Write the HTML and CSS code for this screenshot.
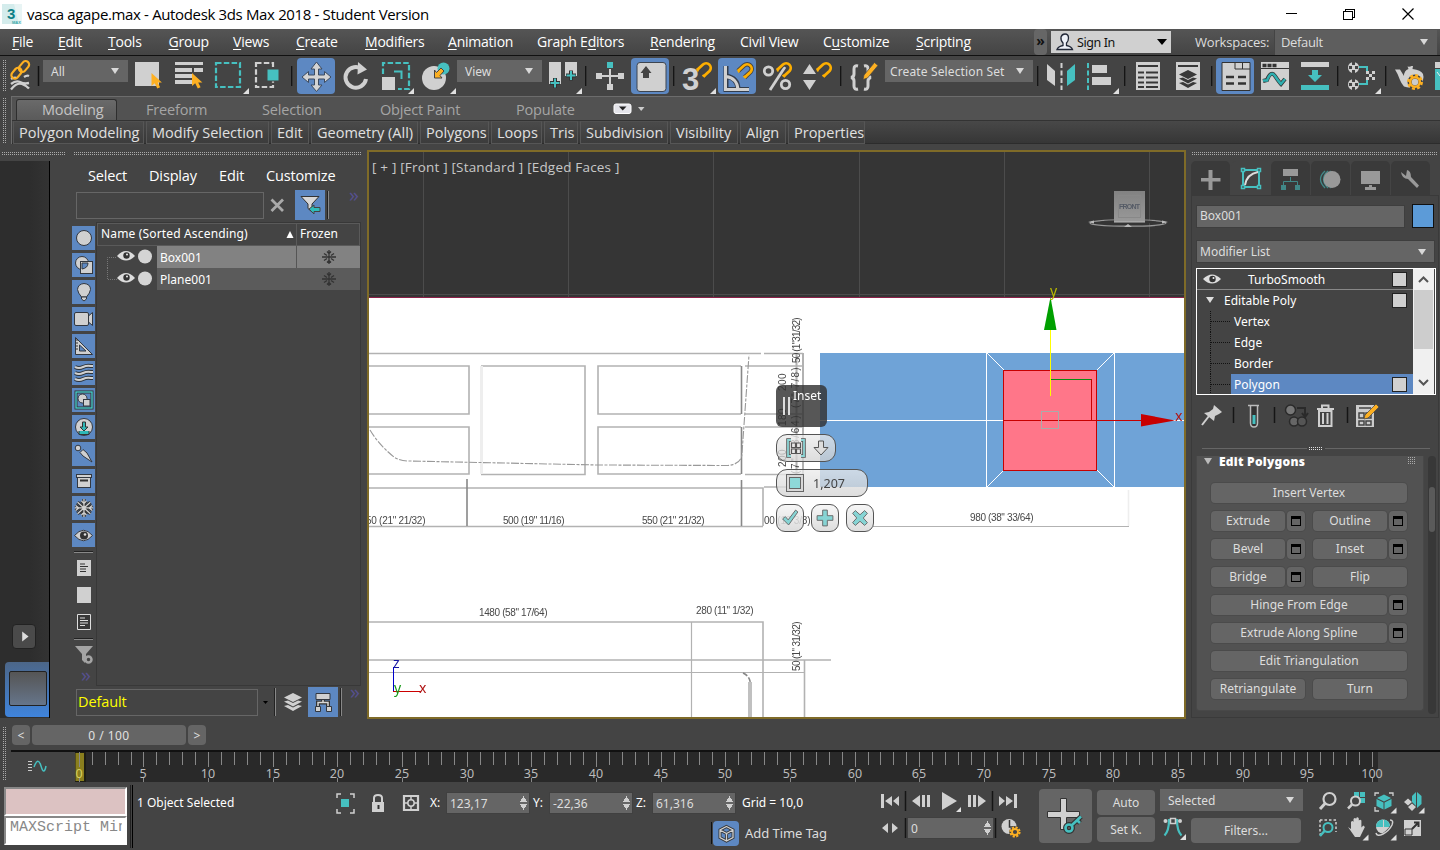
FILE: index.html
```html
<!DOCTYPE html>
<html lang="en">
<head>
<meta charset="utf-8">
<title>vasca agape.max - Autodesk 3ds Max 2018 - Student Version</title>
<link rel="stylesheet" href="styles.css">
</head>
<body>
<svg width="0" height="0" class="defs">
  <defs>
    <linearGradient id="cube" x1="0" y1="0" x2="0" y2="1"><stop offset="0" stop-color="#828282"/><stop offset="1" stop-color="#999"/></linearGradient>
    <path id="cursor" d="M0 0V13L3.2 10.2L5.8 15.6L8.6 14.2L6.2 9.4H10.4Z" fill="#fdb022"/>
    <g id="magnet" fill="none"><path d="M1 8L7 2.500A4.600 4.600 0 0 1 13.500 9L7.500 14.500" stroke="#444" stroke-width="4.500"/><path d="M1 8L7 2.500A4.600 4.600 0 0 1 13.500 9L7.500 14.500" stroke="#fdae00" stroke-width="2.800"/><path d="M2 9.500L1.200 6.500M9 15L6.500 13" stroke="#fdae00" stroke-width="2"/></g>
    <path id="corner" d="M6 0V6H0Z" fill="#e0e0e0"/>
    <g id="wave"><path d="M1 3Q5 5 9 3T17 2H19" fill="none" stroke="#2e3338" stroke-width="4"/><path d="M1 3Q5 5 9 3T17 2H19" fill="none" stroke="#d0d0d0" stroke-width="2"/></g>
    <g id="flake"><path d="M7 0V14M0 7H14M2 2.500L12 11.500M12 2.500L2 11.500M5 1.500L7 3.500L9 1.500M5 12.500L7 10.500L9 12.500M0.500 5L3 7L0.500 9M13.500 5L11 7L13.500 9" fill="none"/></g>
    <g id="frost"><path d="M7 0V14M0 7H14M5 1.500L7 3.500L9 1.500M5 12.500L7 10.500L9 12.500M2 3.500L5 5.500M2 10.500L5 8.500M12 3.500L9 5.500M12 10.500L9 8.500" fill="none"/></g>
    <g id="layers"><path d="M9 0L18 4.500L9 9L0 4.500Z"/><path d="M0 8.500L4 7.400L9 10L14 7.400L18 8.500L9 13.500Z"/><path d="M0 13L4 12L9 14.600L14 12L18 13L9 18Z"/></g>
  </defs>
</svg>

<header class="titlebar">
  <svg class="applogo" width="20" height="20" viewBox="0 0 20 20"><rect width="20" height="20" fill="#d4ecec"/><path d="M12 0H20V20H17Z" fill="#e8f4f4"/><text x="5" y="15" class="logo3">3</text><text x="10" y="20" class="logom">MAX</text></svg>
  <span class="apptitle">vasca agape.max - Autodesk 3ds Max 2018 - Student Version</span>
  <svg class="winbtns" width="160" height="28" viewBox="1280 0 160 28"><path d="M1285.500 13.500H1297M1343.500 11.500H1352.500V19.500H1343.500ZM1345.500 11V9.500H1354.500V17.500H1353" fill="none" stroke="#000" shape-rendering="crispEdges"/><path d="M1402.500 8.500L1413.500 19.500M1413.500 8.500L1402.500 19.500" stroke="#000" stroke-width="1.2"/></svg>
</header>

<nav class="menubar">
  <div class="menus">
    <span><u>F</u>ile</span><span><u>E</u>dit</span><span><u>T</u>ools</span><span><u>G</u>roup</span><span><u>V</u>iews</span><span><u>C</u>reate</span><span><u>M</u>odifiers</span><span><u>A</u>nimation</span><span>Graph E<u>d</u>itors</span><span><u>R</u>endering</span><span>Civil View</span><span>C<u>u</u>stomize</span><span><u>S</u>cripting</span>
  </div>
  <span class="more">»</span>
  <div class="signin"><svg width="18" height="18" viewBox="0 0 18 18"><path d="M1 16.500Q2 13.500 7 12.500L7 10Q4.500 7.500 5 4Q6 1 9 1Q12.500 1 12.500 5Q12.500 8 10.500 10V12.500Q15.500 13.500 16.500 16.500Z" fill="#eef1f8" stroke="#222838" stroke-width="1.300"/></svg><span>Sign In</span><i class="tri dark"></i></div>
  <span class="wslabel">Workspaces:</span>
  <div class="wsselect"><span>Default</span><i class="tri"></i></div>
</nav>

<div class="toolbar">
  <i class="vgrip"></i>
  <svg width="37" height="40" viewBox="6 56 37 40"><path d="M11 79Q14 77 17 78M24 77Q27 75 29 76M11 84Q16 80 20 82T29 83M11 89.500Q17 82 22 84T29 88.500" fill="none" stroke="#d0d0d0" stroke-width="2.300"/><g fill="none" stroke="#fdb022" stroke-width="2.200"><rect x="10.500" y="69.700" width="12" height="7" rx="3.500" transform="rotate(-50 16.500 73.200)"/><rect x="18" y="63" width="12" height="7" rx="3.500" transform="rotate(-50 24 66.500)"/></g><path d="M38.500 66V86" stroke="#111" stroke-width="1.500"/></svg>
  <div class="drop w85"><span>All</span><i class="tri"></i></div>
  <svg width="41" height="40" viewBox="128 56 41 40"><path d="M135 62H159V86H135Z" fill="#d0d0d0"/><use href="#cursor" x="151.500" y="73"/></svg>
  <svg width="40" height="40" viewBox="169 56 40 40"><path d="M175 62h28v3h-28zM175 68h17v4h-17zM194 68h9v4h-9zM175 74h17v4h-17zM175 80h17v4h-17z" fill="#d0d0d0"/><use href="#cursor" x="192" y="73"/></svg>
  <svg width="40" height="40" viewBox="209 56 40 40"><path d="M216 63H240V87H216Z" fill="none" stroke="#46c0c0" stroke-width="2.200" stroke-dasharray="5.500 2.300"/><use href="#corner" x="243" y="88"/></svg>
  <svg width="42" height="40" viewBox="249 56 42 40"><path d="M256 63H273V87H256Z" fill="none" stroke="#d0d0d0" stroke-width="2.200" stroke-dasharray="5.500 2.300"/><path d="M267 69h12v12h-12z" fill="#46c0c0" stroke="#444"/></svg>
  <i class="tsep"></i>
  <svg class="on first" width="38" height="36" viewBox="297 58 38 36"><path d="M316.500 62L322 69H318.500V75H324.500V71.500L331 77L324.500 82.500V79H318.500V85H322L316.500 91.500L311 85H314.500V79H308.500V82.500L302 77L308.500 71.500V75H314.500V69H311Z" fill="#d4d4d4" stroke="#3d4b60"/></svg>
  <svg width="42" height="40" viewBox="335 56 42 40"><path d="M362.500 69.500A10.300 10.300 0 1 0 366 79" fill="none" stroke="#d0d0d0" stroke-width="4"/><path d="M358 62L367 69.500L357.500 74.500Z" fill="#d0d0d0"/></svg>
  <svg width="40" height="40" viewBox="377 56 40 40"><path d="M383 74V63H409V89H398" fill="none" stroke="#46c0c0" stroke-width="2.200" stroke-dasharray="5.500 2.300"/><path d="M394 71.500H401.500V79" fill="none" stroke="#46c0c0" stroke-width="2"/><path d="M382 77h13v13h-13z" fill="#d0d0d0"/><use href="#corner" x="408" y="88"/></svg>
  <svg width="40" height="40" viewBox="417 56 40 40"><circle cx="434" cy="78" r="12" fill="#d0d0d0"/><circle cx="443.500" cy="68.500" r="6" fill="#46c0c0"/><path d="M444 71L441 68L436.500 72.500L434.500 70V78H442L440 75.500Z" fill="#fdb022" stroke="#444"/><use href="#corner" x="450" y="88"/></svg>
  <div class="drop w85"><span>View</span><i class="tri"></i></div>
  <svg width="43" height="40" viewBox="542 56 43 40"><path d="M549 62h12v22h-12zM565 62h12v14h-12z" fill="#d0d0d0"/><path d="M555 78v10M550 83h10M571 70.500v10M566 75.500h10" stroke="#333" stroke-width="4"/><path d="M555 78.500v9M550.500 83h9M571 71v9M566.500 75.500h9" stroke="#46c0c0" stroke-width="2"/><use href="#corner" x="576" y="88"/></svg>
  <i class="tsep"></i>
  <svg width="44" height="40" viewBox="587 56 44 40"><path d="M607 62h6v6h-6z" fill="#46c0c0"/><path d="M596 73h6v6h-6zM618 73h6v6h-6zM607 84h6v6h-6zM609 69h2v15h-2zM602 75h16v2h-16z" fill="#d0d0d0"/></svg>
  <svg class="on" width="38" height="36" viewBox="631 58 38 36"><rect x="637" y="62.500" width="29" height="29" rx="3" fill="#d0d0d0" stroke="#3d4550"/><path d="M646 66L651.500 73H649V78H643V73H640.500Z" fill="#444"/></svg>
  <svg width="4" height="40" viewBox="669 56 4 40"></svg>
  <i class="tsep"></i>
  <svg width="43" height="40" viewBox="675 56 43 40"><text x="682" y="89.500" class="t3">3</text><use href="#magnet" x="696" y="62"/><use href="#corner" x="710" y="88"/></svg>
  <svg class="on" width="38" height="36" viewBox="718 58 38 36"><path d="M726 66V89.500H749M726 76Q738 78 738 89.500" fill="none" stroke="#333d4c" stroke-width="5"/><path d="M725.500 66V89.500H749M726 76.500Q737 78 738 89.500" fill="none" stroke="#d0d0d0" stroke-width="3"/><use href="#magnet" x="737" y="63"/></svg>
  <svg width="41" height="40" viewBox="756 56 41 40"><g fill="none" stroke="#d0d0d0" stroke-width="2.800"><circle cx="768.500" cy="71" r="4.200"/><circle cx="785.500" cy="84.500" r="4.200"/><path d="M785 67L770 90"/></g><use href="#magnet" x="776" y="62"/></svg>
  <svg width="43" height="40" viewBox="797 56 43 40"><path d="M809.500 64L816 74H803ZM803 80H816L809.500 90Z" fill="#d0d0d0"/><use href="#magnet" x="816" y="62"/></svg>
  <i class="tsep"></i>
  <svg width="43" height="40" viewBox="842 56 43 40"><path d="M858 66Q854 65 854 69V74Q854 77 851 77.500Q854 78 854 81V86Q854 90 858 89M864 66Q868 65 868 69V74Q868 77 871 77.500Q868 78 868 81V86Q868 90 864 89" fill="none" stroke="#d0d0d0" stroke-width="3"/><path d="M864 75L874.500 62.500L878 65.500L867.500 78L863 79.500Z" fill="#fdb022" stroke="#444" stroke-width=".7"/></svg>
  <div class="drop w148"><span>Create Selection Set</span><i class="tri"></i></div>
  <svg width="4" height="40" viewBox="1033 56 4 40"></svg>
  <i class="tsep"></i>
  <svg width="41" height="40" viewBox="1039 56 41 40"><path d="M1047 64L1055 71V86L1047 80Z" fill="#d0d0d0"/><path d="M1075 64L1067 71V86L1075 80Z" fill="#46c0c0"/><path d="M1061.500 63V90" stroke="#d0d0d0" stroke-width="2" stroke-dasharray="5 2.500"/></svg>
  <svg width="44" height="40" viewBox="1080 56 44 40"><path d="M1088 63V90" stroke="#46c0c0" stroke-width="2" stroke-dasharray="5 2.500"/><path d="M1092 65h15v8h-15zM1092 77h19v8h-19z" fill="#d0d0d0"/><use href="#corner" x="1113" y="88"/></svg>
  <i class="tsep"></i>
  <svg width="42" height="40" viewBox="1126 56 42 40"><path d="M1136 62h24v28h-24z" fill="#d0d0d0"/><path d="M1138 66h20M1138 72.500h6M1146 72.500h12M1138 77.500h6M1146 77.500h12M1138 82.500h6M1146 82.500h12M1138 87h6M1146 87h12" stroke="#383838" stroke-width="2"/></svg>
  <svg width="43" height="40" viewBox="1168 56 43 40"><path d="M1176 62h24v28h-24z" fill="#d0d0d0"/><path d="M1178 66h20" stroke="#383838" stroke-width="2"/><use href="#layers" x="1179" y="70" fill="#383838"/></svg>
  <i class="tsep"></i>
  <svg width="3" height="40" viewBox="1213 56 3 40"></svg>
  <svg class="on" width="38" height="36" viewBox="1216 58 38 36"><path d="M1222 62.500H1250V90.500H1222Z" fill="#d0d0d0" stroke="#333"/><path d="M1235 62.500V69H1250M1242.500 62.500V69" fill="none" stroke="#333"/><path d="M1226 77h8M1238 77h8M1226 83.500h8M1238 83.500h8" stroke="#333" stroke-width="2.500"/></svg>
  <svg width="40" height="40" viewBox="1254 56 40 40"><path d="M1261 62h28v28h-28z" fill="#d0d0d0"/><path d="M1261 68.500h28" stroke="#333"/><path d="M1262.500 65.500h14" stroke="#333" stroke-width="3.500" stroke-dasharray="4 1"/><path d="M1263 81L1267 80Q1271 70 1275 76T1281 84L1285 79" fill="none" stroke="#333" stroke-width="4"/><path d="M1263 80.500H1267Q1271 70 1275 76T1281 84L1285 79" fill="none" stroke="#2fafb0" stroke-width="2.500"/></svg>
  <svg width="43" height="40" viewBox="1294 56 43 40"><path d="M1301 62h28v5h-28z" fill="#d0d0d0"/><path d="M1301 85h28v5h-28zM1312 70h6v5h4L1315 82L1308 75h4z" fill="#46c0c0"/></svg>
  <i class="tsep"></i>
  <svg width="46" height="40" viewBox="1339 56 46 40"><path d="M1359 67H1367V72M1359 84H1367V79" fill="none" stroke="#46c0c0" stroke-width="2"/><circle cx="1353.500" cy="67.500" r="5.500" fill="#d0d0d0"/><circle cx="1353.500" cy="84.500" r="5.500" fill="#d0d0d0"/><path d="M1352 62h3v3h-3zM1349 66h3v3h-3zM1355 66h3v3h-3zM1352 70h3v3h-3zM1352 79h3v3h-3zM1349 83h3v3h-3zM1355 83h3v3h-3zM1352 87h3v3h-3z" fill="#444"/><path d="M1366 71h3v3h-3zM1372 71h3v3h-3zM1369 74h3v3h-3zM1366 77h3v3h-3zM1372 77h3v3h-3z" fill="#d0d0d0"/><use href="#corner" x="1375" y="88"/></svg>
  <i class="tsep"></i>
  <svg width="54" height="40" viewBox="1387 56 54 40"><path d="M1395 69.500H1400L1404 76Q1404 70.500 1408.500 69L1407.500 66.500Q1410 67 1411.500 66L1413 66L1412.500 69Q1421 70 1423 74Q1425 80 1419 86Q1410 89 1404 86.500Q1401 83 1400 80Q1398 74 1395 69.500Z" fill="#d0d0d0"/><circle cx="1415" cy="82" r="7.500" fill="#444"/><circle cx="1415" cy="82" r="6.700" fill="none" stroke="#fdb022" stroke-width="2.500" stroke-dasharray="3 2.260"/><circle cx="1415" cy="82" r="4.800" fill="none" stroke="#fdb022" stroke-width="2.600"/><circle cx="1415" cy="82" r="3.200" fill="#ccc"/><path d="M1435 62h6v6h-6z" fill="#d0d0d0"/><path d="M1435 69h6v21h-6z" fill="#46c0c0"/><path d="M1437 72L1440 76" stroke="#eee"/></svg>
</div>

<div class="ribbon">
  <i class="vgrip tall"></i>
  <div class="ribbody">
    <div class="tabs"><span class="tab active">Modeling</span><span>Freeform</span><span>Selection</span><span>Object Paint</span><span>Populate</span>
      <svg width="40" height="14" viewBox="612 102 40 14"><rect x="614" y="104" width="17" height="9.500" rx="2" fill="#e4e4ea" stroke="#fff"/><path d="M619 106.500H626.500L622.700 110.500Z" fill="#222"/><path d="M638 107H644.500L641.200 111Z" fill="#ccc"/></svg></div>
    <div class="panels"><span>Polygon Modeling</span><span>Modify Selection</span><span>Edit</span><span>Geometry (All)</span><span>Polygons</span><span>Loops</span><span>Tris</span><span>Subdivision</span><span>Visibility</span><span>Align</span><span>Properties</span></div>
  </div>
</div>

<main class="work">
  <aside class="vptabs">
    <i class="hgrip"></i>
    <div class="strip"><svg class="expand" width="24" height="25" viewBox="0 0 24 25"><path d="M10 7L17 12.500L10 18Z" fill="#ddd"/></svg><div class="layout"><i></i></div></div>
  </aside>

  <section class="explorer">
    <i class="hgrip"></i>
    <div class="exmenu"><span>Select</span><span>Display</span><span>Edit</span><span>Customize</span></div>
    <div class="exsearch"><div class="field"></div>
      <svg width="31" height="30" viewBox="264 190 31 30"><path d="M271.500 199.500L283 211M283 199.500L271.500 211" stroke="#aaa" stroke-width="2.800"/></svg>
      <svg class="sq" width="30" height="30" viewBox="295 190 30 30"><path d="M301 196.500H319L312 204V212L308 208.500V204Z" fill="#d8d8d8" stroke="#333"/><path d="M309 209L314 205V207.500H320V211.500H314V214Z" fill="#2ebcb9" stroke="#444"/></svg>
      <i class="exsep"></i><span class="chev">»</span></div>
    <div class="exbody">
      <div class="filters">
        <svg class="sq" viewBox="0 0 23 24"><circle cx="12" cy="12" r="7.500" class="o"/></svg>
        <svg class="sq" viewBox="0 0 23 24"><circle cx="10" cy="10" r="6.500" class="o"/><rect x="8.500" y="8.500" width="12" height="12" class="o"/><path d="M10 10h6M10 10v6Q16 15 16 10" class="b"/></svg>
        <svg class="sq" viewBox="0 0 23 24"><path d="M12 3.500Q18.500 4 18.500 9.500Q18 13 14.500 17H9.500Q6 13 5.500 9.500Q6 4 12 3.500Z" class="o"/><path d="M9.500 17H14.500V19L12 21L9.500 19Z" class="o"/></svg>
        <svg class="sq" viewBox="0 0 23 24"><path d="M16.500 9L20.500 5.500V18.500L16.500 15Z" class="o"/><rect x="2.500" y="5.500" width="14" height="13" rx="1.500" class="o"/></svg>
        <svg class="sq" viewBox="0 0 23 24"><path d="M3.500 3.500V20.500H20.500Z" class="o"/><path d="M7.500 11V17H14Z" class="b"/><path d="M4 6h2M4 9h2M4 12h2M4 15h2" stroke="#333"/></svg>
        <svg class="sq" viewBox="0 0 23 24"><use href="#wave" x="2" y="3"/><use href="#wave" x="2" y="9"/><use href="#wave" x="2" y="15"/></svg>
        <svg class="sq" viewBox="0 0 23 24"><rect x="4" y="4" width="16" height="16" fill="#5c87c0" stroke="#333" stroke-width="3"/><rect x="4" y="4" width="16" height="16" fill="none" stroke="#46d0d0" stroke-width="1.300"/><circle cx="10.500" cy="10.500" r="4.500" class="o"/><rect x="11.500" y="11.500" width="6.500" height="6.500" class="o"/></svg>
        <svg class="sq" viewBox="0 0 23 24"><circle cx="12" cy="12" r="8.500" class="o"/><path d="M10.500 7h3v5h2.500L12 16L8 12h2.500zM7 16v3.500h10V16" fill="#2eb8b8" stroke="#333"/></svg>
        <svg class="sq" viewBox="0 0 23 24"><circle cx="6" cy="6" r="2.800" class="o"/><path d="M8 10.500L11 7.500L15 11L20 20L11 14Z" class="o"/></svg>
        <svg class="sq" viewBox="0 0 23 24"><rect x="5.500" y="8" width="13" height="10.500" class="o"/><rect x="4.500" y="5.500" width="15" height="3" class="o"/><path d="M8 11.500h8" stroke="#333" stroke-width="2"/></svg>
        <svg class="sq" viewBox="0 0 23 24"><g transform="translate(3 3) scale(1.280)"><use href="#flake" stroke="#333" stroke-width="2.600"/><use href="#flake" stroke="#d0d0d0"/></g></svg>
        <svg class="sq" viewBox="0 0 23 24"><path d="M2.500 12.500Q11.500 2 20.500 12.500Q11.500 23 2.500 12.500Z" class="o"/><circle cx="12" cy="12.500" r="4" fill="#333"/><circle cx="13" cy="11.500" r="1.300" fill="#ddd"/></svg>
        <hr>
        <svg viewBox="0 0 23 24"><path d="M5 4h14v16H5z" fill="#d0d0d0"/><path d="M8 8h5M8 10.500h8M8 13h6M8 15.500h6" stroke="#333"/></svg>
        <svg viewBox="0 0 23 24"><path d="M5 4h14v16H5z" fill="#d0d0d0"/></svg>
        <svg viewBox="0 0 23 24"><path d="M5.500 4.500h13v15h-13z" fill="#383838" stroke="#ddd"/><path d="M8 8h5M8 10.500h8M8 13h8M8 15.500h5" stroke="#ddd"/></svg>
        <hr>
        <svg viewBox="0 0 23 24"><path d="M3 3H21L14 11V14L13 20L10 17V11Z" fill="#a4a4a4"/><circle cx="16.500" cy="16.500" r="3" fill="#444" stroke="#a4a4a4" stroke-width="2.500"/></svg>
        <span class="chev">»</span>
      </div>
      <div class="tree">
        <div class="thead"><span>Name (Sorted Ascending)</span><svg width="8" height="8" viewBox="0 0 8 8"><path d="M4 0L7.500 7H.5Z" fill="#fff"/></svg><span class="fz">Frozen</span></div>
        <div class="trow sel"><svg width="59" height="22" viewBox="98 246 59 22"><path d="M107.500 268V257.500H117" fill="none" stroke="#777" stroke-dasharray="1 1"/><path d="M117 256Q126 246 135 256Q126 265 117 256Z" fill="#ddd"/><circle cx="126.500" cy="255.500" r="3.200" fill="#333"/><circle cx="127" cy="254.500" r="1" fill="#eee"/><circle cx="145" cy="256.500" r="7" fill="#d4d4d4"/></svg><span class="nm">Box001</span><span class="fr"><svg width="16" height="16" viewBox="-1 -1 16 16"><use href="#frost" stroke="#333" stroke-width="1.300"/></svg></span></div>
        <div class="trow"><svg width="59" height="22" viewBox="98 246 59 22"><path d="M107.500 246V257.500H117" fill="none" stroke="#777" stroke-dasharray="1 1"/><path d="M117 256Q126 246 135 256Q126 265 117 256Z" fill="#ddd"/><circle cx="126.500" cy="255.500" r="3.200" fill="#333"/><circle cx="127" cy="254.500" r="1" fill="#eee"/><circle cx="145" cy="256.500" r="7" fill="#d4d4d4"/></svg><span class="nm">Plane001</span><span class="fr"><svg width="16" height="16" viewBox="-1 -1 16 16"><use href="#frost" stroke="#333" stroke-width="1.300"/></svg></span></div>
      </div>
    </div>
    <div class="exfoot"><div class="field">Default</div>
      <svg width="50" height="30" viewBox="258 687 50 30"><path d="M263 701H268L265.500 704Z" fill="#000"/><path d="M275.500 688V716" stroke="#888"/><path d="M274.500 688V716" stroke="#222"/><use href="#layers" x="284" y="693" fill="#d0d0d0"/></svg>
      <svg class="sq" width="30" height="30" viewBox="308 687 30 30"><path d="M323 699v3M318 707v-4.500h10V707" fill="none" stroke="#333" stroke-width="4"/><path d="M323 699v3.500M318 707v-4.500h10V707" fill="none" stroke="#d8d8d8" stroke-width="1.500"/><path d="M316 693.500h14v6h-14zM315.500 706.500h5v5h-5zM326.500 706.500h5v5h-5z" class="o"/></svg>
      <i class="exsep"></i><span class="chev">»</span></div>
  </section>

  <section class="viewport">
    <svg class="scene" width="815" height="565" viewBox="369 152 815 565">
      <rect x="369" y="152" width="815" height="146" fill="#353535"/>
      <path d="M423.500 152V297M568.500 152V297M713.500 152V297M859.500 152V297M1004.500 152V297M1149.500 152V297M369 294.500H1184" stroke="#4c4c4c"/>
      <path d="M369 297.500H1184" stroke="#8c2048"/>
      <rect x="369" y="298" width="815" height="419" fill="#fff"/>
      <g class="plan" fill="none" stroke="#b2b2b2" stroke-width="1.600">
        <path d="M369 353.500H761M764 353.500H803M369 488H763V526M369 526.500H763M764 487H803"/>
        <path d="M369 366H469V414H369M369 427H469V474H369M481 366H585V474.500H481M741 366H598V414H741M741 427H598V474H741M745 366H803M745 414H803M745 427H803M745 474.500H803"/>
        <path d="M481.500 366V474" stroke="#eee" stroke-width="3"/>
        <path d="M467 479V526M741.500 480V526M741.500 366V414M741.500 427V474" stroke="#888"/>
        <path d="M803 353V488M796.500 353V474" stroke-width="2"/>
        <path d="M369 622H763V717M369 660H831M804.500 660V717"/>
        <path d="M369 672.500H804M691.500 622V717M873 526.500H1129" stroke-width="1.200"/>
        <path d="M1128.500 490V526" stroke="#eee"/>
        <path d="M750 682V717" stroke-width="4" stroke="#c0c0c0"/>
        <path d="M743 673Q750 676 750.500 684" stroke="#888" stroke-dasharray="5 2"/>
        <path d="M370 430Q379 445 394 457Q400 461 408 461L598 465L728 465.500Q742 464 742 453L749 355" stroke="#999" stroke-width="1.100" stroke-dasharray="8 1.500 3 1.500"/>
      </g>
      <g class="dims">
        <text x="366" y="524" textLength="59">50 (21" 21/32)</text>
        <text x="503" y="524" textLength="61">500 (19" 11/16)</text>
        <text x="642" y="524" textLength="62">550 (21" 21/32)</text>
        <text x="764" y="524" textLength="46">00 (13 3/8)</text>
        <text x="479" y="615.500" textLength="68">1480 (58" 17/64)</text>
        <text x="696" y="613.500" textLength="57">280 (11" 1/32)</text>
        <text x="970" y="521" textLength="63">980 (38" 33/64)</text>
        <text transform="translate(800 363) rotate(-90)" textLength="45">50 (1"31/32)</text>
        <text transform="translate(799 408) rotate(-90)" textLength="40">(7" 7/8)</text>
        <text transform="translate(799 474) rotate(-90)" textLength="58">(7" 33/64)</text>
        <text transform="translate(786 391) rotate(-90)" textLength="17">200</text>
        <text transform="translate(786 426) rotate(-90)" textLength="17">180</text>
        <text transform="translate(786 467) rotate(-90)" textLength="17">200</text>
        <text transform="translate(800 671) rotate(-90)" textLength="49">50 (1" 31/32)</text>
      </g>
      <g shape-rendering="crispEdges">
        <rect x="820" y="353" width="364" height="134" fill="#6fa3d7"/>
        <path d="M986.500 353V487M1114.500 353V487M820 420.500H1184" stroke="#fff"/>
        <path d="M987 353L1004 370M1114 353L1097 370M987 487L1004 470M1114 487L1097 470" stroke="#fff"/>
        <rect x="1003.500" y="370.500" width="93" height="100" fill="#ff7689" stroke="#c80000"/>
        <path d="M1051 379.500H1091" stroke="#0a8c10"/>
        <path d="M1091.500 379V420M1003 420.500H1142" stroke="#c80000"/>
        <path d="M1050.500 330V396" stroke="#ff0"/>
        <rect x="1041.500" y="411.500" width="17" height="17" fill="none" stroke="#aaa"/>
      </g>
      <path d="M1050.500 297L1056.500 330H1044Z" fill="#00a000"/><path d="M1175 420.500L1141 414V426.500Z" fill="#c80000"/>
      <text x="1050" y="296" class="ax" fill="#b9b900">y</text><text x="1175" y="421" class="ax" fill="#b01515">x</text>
      <path d="M393.500 667V691.500" stroke="#00c"/><path d="M393 691.500H421" stroke="#c00"/>
      <text x="393" y="668" class="ax" fill="#1515a0">z</text><text x="394" y="693" class="ax" fill="#1a9a1a">y</text><text x="419" y="693" class="ax" fill="#b01515">x</text>
      <ellipse cx="1128" cy="223" rx="38" ry="3.200" fill="none" stroke="#999" stroke-width="1.200"/>
      <ellipse cx="1128" cy="222" rx="28" ry="2" fill="#353535"/>
      <rect x="1114" y="191" width="31" height="31" fill="url(#cube)"/><path d="M1114 222H1145" stroke="#bbb"/><rect x="1118.500" y="195.500" width="22" height="22" fill="none" stroke="#888"/><text x="1119" y="209" class="cube" textLength="21">FRONT</text>
      <path d="M1088 222l6-1.500v3zM1168 222l-6-1.500v3zM1124 227l4-3l4 3z" fill="#bbb"/>
    </svg>
    <div class="vplabel">[ + ] [Front ] [Standard ] [Edged Faces ]</div>
    <div class="caddy">
      <div class="cadtitle"><i></i><span>Inset</span></div>
      <div class="pill p1"><svg width="24" height="20" viewBox="0 0 24 20"><path d="M7 2H4V18H7M17 2H20V18H17" fill="none" stroke="#555" stroke-width="3.500"/><path d="M7 2H4V18H7M17 2H20V18H17" fill="none" stroke="#8ed6d6" stroke-width="1.800"/><path d="M7.500 5h4v4.500h-4zM12.500 5h4v4.500h-4zM7.500 11h4v4.500h-4zM12.500 11h4v4.500h-4z" fill="#e8e8e8" stroke="#555" stroke-width="1.200"/></svg><svg width="16" height="20" viewBox="0 0 16 20"><path d="M5.500 3h5v6.500H15L8 17L1 9.500H5.500Z" fill="#ddd" stroke="#555"/></svg></div>
      <div class="pill p2"><svg width="18" height="18" viewBox="0 0 18 18"><rect x=".5" y=".5" width="17" height="17" fill="#d8d8d8" stroke="#666"/><rect x="3.500" y="3.500" width="11" height="11" fill="#8ed8d8" stroke="#666"/></svg><span>1,207</span></div>
      <div class="cadbtns">
        <svg width="28" height="28" viewBox="0 0 28 28"><path d="M6 15L9 12.500L12 16L20 5.500L22.500 7.500L12.500 21.500Z" class="cg"/></svg>
        <svg width="28" height="28" viewBox="0 0 28 28"><path d="M11.500 5.500h5v6h6v5h-6v6h-5v-6h-6v-5h6z" class="cg"/></svg>
        <svg width="28" height="28" viewBox="0 0 28 28"><path d="M6 9L9 6L14 10.500L19 6L22 9L17.500 14L22 19L19 22L14 17.500L9 22L6 19L10.500 14Z" class="cg"/></svg>
      </div>
    </div>
  </section>

  <aside class="command">
    <i class="hgrip"></i>
    <div class="ctabs">
      <svg viewBox="0 0 39 34"><path d="M17.500 9h4v8h8v3.500h-8v8.500h-4v-8.500H10V17h7.500z" fill="#999"/></svg>
      <svg class="act" viewBox="0 0 39 34"><path d="M12 9h16v17H12z" fill="none" stroke="#46c0c0" stroke-width="2"/><path d="M10.500 7.500h3v3h-3zM26.500 7.500h3v3h-3zM10.500 24.500h3v3h-3zM26.500 24.500h3v3h-3z" fill="#444" stroke="#46c0c0" stroke-width="1.500"/><path d="M14 24Q16 13 27 11" fill="none" stroke="#ddd" stroke-width="2"/></svg>
      <svg viewBox="0 0 39 34"><path d="M12 8h15v7H12z" fill="#999"/><path d="M19.500 16v4M12.500 24v-3.500h14V24" fill="none" stroke="#418888"/><path d="M10 24h5v5h-5zM24 24h5v5h-5z" fill="#418888"/></svg>
      <svg viewBox="0 0 39 34"><path d="M14 10Q5 18 14 27M17 10Q8 18 17 27M20 10Q11 18 20 27" fill="none" stroke="#418888" stroke-width="1.300"/><circle cx="21" cy="18.500" r="8.500" fill="#999"/></svg>
      <svg viewBox="0 0 39 34"><path d="M10 10h19v13H10zM18 24h3v2h4v3H14v-3h4z" fill="#999"/></svg>
      <svg viewBox="0 0 39 34"><path d="M10 11L15 15L16 9Q20 10 20 16L28 24.500L26 27L17 18Q11 18 10 11Z" fill="#999"/></svg>
    </div>
    <div class="cbody">
      <div class="objname"><div class="inp">Box001</div><i></i></div>
      <div class="inp modlist"><span>Modifier List</span><i class="tri"></i></div>
      <div class="stack">
        <div class="srows">
          <div class="s0"><svg width="51" height="20" viewBox="1197 269 51 20"><path d="M1203 279Q1212 270 1221 279Q1212 288 1203 279Z" fill="#ddd"/><circle cx="1212.500" cy="279" r="3.200" fill="#333"/><circle cx="1213.500" cy="278" r="1" fill="#eee"/></svg><span>TurboSmooth</span><i></i></div>
          <div class="s1"><svg width="27" height="21" viewBox="0 0 27 21"><path d="M9 7H17L13 13Z" fill="#ddd"/></svg><span>Editable Poly</span><i></i></div>
          <div class="s2"><span>Vertex</span></div><div class="s2"><span>Edge</span></div><div class="s2"><span>Border</span></div><div class="s2 cur"><span>Polygon<i></i></span></div>
        </div>
        <svg class="sbar" width="21" height="125" viewBox="0 0 21 125"><path d="M0 0h21v125H0z" fill="#f0f0f0"/><path d="M1 21h19v59H1z" fill="#cdcdcd"/><path d="M6 13L10.500 8.500L15 13M6 111L10.500 115.500L15 111" fill="none" stroke="#555" stroke-width="2"/></svg>
      </div>
      <svg class="stools" width="239" height="28" viewBox="1196 401 239 28">
        <path d="M1202 425L1209 416" stroke="#d0d0d0" stroke-width="2"/><path d="M1214 405L1222 412L1219 414L1215 416L1214 421L1204 413L1209 412L1213 409Z" fill="#d0d0d0"/>
        <path d="M1233.500 407V423M1274.500 407V423M1347.500 407V423" stroke="#151515" stroke-width="1.500"/>
        <path d="M1248 405.500h11M1250.500 405v18q0 4 3.500 4t3.500-4v-18" fill="#333" stroke="#bbb" stroke-width="1.500"/><path d="M1252.500 415h3v9h-3z" fill="#46c0c0"/>
        <circle cx="1290.500" cy="410" r="5" fill="#777" stroke="#2a2a2a" stroke-width="1.500"/><circle cx="1294" cy="421.500" r="4.500" fill="#666" stroke="#2a2a2a" stroke-width="1.500"/><circle cx="1302" cy="421.500" r="4.500" fill="#555" stroke="#2a2a2a" stroke-width="1.500"/><path d="M1297 408h8v8M1302 413l3 4l3-4" fill="none" stroke="#2a2a2a" stroke-width="2"/>
        <path d="M1317 409h17M1322 408v-2.500h6.500v2.500M1319 411v15h12.500v-15z" fill="none" stroke="#d0d0d0" stroke-width="2"/><path d="M1323 413v11M1327.500 413v11" stroke="#d0d0d0" stroke-width="2"/>
        <path d="M1356 405h18v22h-18z" fill="#ccc"/><path d="M1359 408h12M1359 413h5v5h-5zM1366 413h5v5h-5zM1359 421h5v4h-5zM1366 421h5v4h-5z" fill="none" stroke="#444" stroke-width="1.500"/><path d="M1365 415L1376 404L1379 407L1368 418L1364 419Z" fill="#fdb022" stroke="#444" stroke-width=".7"/>
      </svg>
      <div class="splitter"><i></i><b></b><i></i></div>
      <div class="rollwrap">
        <div class="rollout">
          <div class="rhead"><svg width="15" height="10" viewBox="0 0 15 10"><path d="M0 1H8L4 7.500Z" fill="#bbb"/></svg><b>Edit Polygons</b><i class="dots"></i></div>
          <div class="rgrid">
            <span class="full">Insert Vertex</span>
            <span>Extrude</span><span class="cfg"></span><span class="c4">Outline</span><span class="cfg"></span>
            <span>Bevel</span><span class="cfg"></span><span class="c4">Inset</span><span class="cfg"></span>
            <span>Bridge</span><span class="cfg"></span><span class="c4 two">Flip</span>
            <span class="wide">Hinge From Edge</span><span class="cfg"></span>
            <span class="wide">Extrude Along Spline</span><span class="cfg"></span>
            <span class="full">Edit Triangulation</span>
            <span class="two">Retriangulate</span><span class="c4 two">Turn</span>
          </div>
        </div>
        <div class="rscroll"><i></i></div>
      </div>
    </div>
  </aside>
</main>

<div class="timebar">
  <i class="vgrip tgrip"></i>
  <div class="tbody">
    <div class="slider"><span class="sb">&lt;</span><span class="sval">0 / 100</span><span class="sb">&gt;</span></div>
    <div class="trackrow">
      <svg width="64" height="30" viewBox="11 752 64 30"><path d="M28 761.500h4M28 764.500h4M28 767.500h4M28 770.500h4" stroke="#ccc"/><path d="M34 767Q38 756 41 766T46 766" fill="none" stroke="#46c0c0" stroke-width="1.500"/></svg>
      <svg id="track" width="1303" height="30" viewBox="75 752 1303 30"><rect x="75" y="752" width="11" height="30" fill="#1e1e14"/><rect x="75.500" y="753" width="8.500" height="28" fill="#8a7f1e"/></svg>
    </div>
  </div>
</div>

<footer class="status">
  <div class="script"><div class="pink"></div><div class="mini"><span>MAXScript Min</span></div></div>
  <i class="fsep"></i>
  <div class="info">
    <div class="irow"><span class="sel">1 Object Selected</span>
      <svg width="99" height="30" viewBox="331 787 99 30"><path d="M337 797v-4h4M350 793h4v4M354 808v4h-4M341 812h-4v-4" fill="none" stroke="#d0d0d0" stroke-width="1.500"/><path d="M341 798h8v8h-8z" fill="#46c0c0"/><path d="M374 801v-4q0-3 4-3t4 3v4" fill="none" stroke="#d0d0d0" stroke-width="2"/><path d="M372 801h12v10h-12z" fill="#d0d0d0"/><path d="M377.500 804h2v4h-2z" fill="#333"/><path d="M404 795h14v14h-14z" fill="none" stroke="#d0d0d0" stroke-width="2.200"/><circle cx="411" cy="802" r="3.200" fill="none" stroke="#d0d0d0" stroke-width="1.500"/><path d="M411 796v3M411 805v3M405 802h3M414 802h3" stroke="#d0d0d0" stroke-width="1.500"/></svg>
      <span class="lb">X:</span><div class="num">123,17<i></i></div><span class="lb">Y:</span><div class="num">-22,36<i></i></div><span class="lb">Z:</span><div class="num">61,316<i></i></div><span class="grid">Grid = 10,0</span></div>
    <div class="irow two"><i class="bsep"></i><svg class="on tt" width="26" height="25" viewBox="0 0 26 25"><g fill="none" stroke="#333" stroke-width="3"><path d="M13.500 5.500L20 9V16.500L13.500 20L7 16.500V9ZM7 9L13.500 12.500L20 9M13.500 12.500V20"/></g><g fill="none" stroke="#d0d0d0" stroke-width="1.300"><path d="M13.500 5.500L20 9V16.500L13.500 20L7 16.500V9ZM7 9L13.500 12.500L20 9M13.500 12.500V20"/></g></svg><span>Add Time Tag</span></div>
  </div>
  <div class="play">
    <svg width="150" height="30" viewBox="878 787 150 30"><path d="M881 794h3v14h-3zM885 801l7-5v10zM893 801l6-5v10zM912 801l8-6v12zM922 795h3v12h-3zM927 795h3v12h-3zM942 792l15 9l-15 9zM968 795h3v12h-3zM973 795h3v12h-3zM978 795l8 6l-8 6zM999 796l6 5l-6 5zM1006 796l7 5l-7 5zM1014 794h3v14h-3z" fill="#d0d0d0"/><path d="M905.500 791v20M992.500 791v20" stroke="#151515" stroke-width="1.500"/><path d="M961 807v5h-5z" fill="#e0e0e0"/></svg>
    <div class="prow"><svg width="29" height="24" viewBox="878 816 29 24"><path d="M882 828l6-5v10zM898 828l-6-5v10z" fill="#d0d0d0"/><path d="M905.500 818v20" stroke="#151515" stroke-width="1.500"/></svg><div class="num">0<i></i></div><svg width="30" height="26" viewBox="994 815 30 26"><path d="M995.500 818v20" stroke="#151515" stroke-width="1.500"/><circle cx="1009" cy="826.500" r="7.500" fill="#d0d0d0"/><path d="M1009.500 820v7h6" fill="none" stroke="#333" stroke-width="1.500"/><circle cx="1015" cy="832" r="5.800" fill="#444"/><circle cx="1015" cy="832" r="4.600" fill="none" stroke="#fdb022" stroke-width="2" stroke-dasharray="2.200 1.400"/><circle cx="1015" cy="832" r="3" fill="none" stroke="#fdb022" stroke-width="1.800"/></svg></div>
  </div>
  <div class="bigkey"><svg width="53" height="54" viewBox="1039 789 53 54"><path d="M1060.500 798.500h6v13h13v6h-13v12h-6v-12h-13v-6h13z" fill="#d0d0d0" stroke="#333"/><g fill="none" stroke="#333" stroke-width="5"><circle cx="1069" cy="828" r="3.500"/><path d="M1071.500 825.500L1081 816.500M1077 820l3 3"/></g><g fill="none" stroke="#46c0c0" stroke-width="2.600"><circle cx="1069" cy="828" r="3.500"/><path d="M1071.500 825.500L1081 816.500M1077 820l3 3"/></g></svg></div>
  <div class="keys"><span>Auto</span><span>Set K.</span></div>
  <div class="keys2"><div class="drop ksel"><span>Selected</span><i class="tri"></i></div>
    <div class="krow"><svg width="31" height="29" viewBox="1160 817 31 29"><path d="M1164.500 837.500Q1169 833 1169 822H1171M1181.500 837.500Q1177 833 1177 822H1175" fill="none" stroke="#46c0c0" stroke-width="2.200"/><circle cx="1165.500" cy="823" r="2" fill="#d0d0d0"/><circle cx="1180" cy="823" r="2" fill="#d0d0d0"/><rect x="1170.500" y="820.500" width="5" height="5" fill="#444" stroke="#d0d0d0" stroke-width="1.500"/><use href="#corner" x="1180" y="836"/></svg><span>Filters...</span></div></div>
  <svg class="nav" width="126" height="60" viewBox="1314 786 126 60">
    <circle cx="1329.500" cy="799" r="6" fill="none" stroke="#d0d0d0" stroke-width="2.200"/><path d="M1325.500 803L1320 809" stroke="#d0d0d0" stroke-width="3"/>
    <path d="M1354 792h5v5h-5zM1360 792h5v5h-5zM1360 798h5v5h-5z" fill="#46c0c0"/><circle cx="1355.500" cy="801" r="4.500" fill="#444" stroke="#d0d0d0" stroke-width="2"/><path d="M1352 804.500L1348 808.500" stroke="#d0d0d0" stroke-width="2.500"/>
    <path d="M1375 796v-3h4M1389 793h4v3M1375 807v4h4" fill="none" stroke="#d0d0d0" stroke-width="1.300"/><path d="M1384 794.500L1391 798L1384 801.500L1377 798ZM1376.500 799L1383.500 802.500V809.500L1376.500 806ZM1391.500 799L1384.500 802.500V809.500L1391.500 806Z" fill="#46c0c0"/><use href="#corner" x="1390.500" y="807.500"/>
    <path d="M1417 792L1421.500 796V804L1417 808ZM1416 792L1412 796V802L1416 806Z" fill="#46c0c0"/><path d="M1408 798.500L1412 802L1408 805.500L1404 802ZM1412 803.500L1416 807L1412 811L1408 807Z" fill="#d0d0d0"/><use href="#corner" x="1418.500" y="807.500"/>
    <path d="M1320 820h16v12M1320 820v14h4" fill="none" stroke="#d0d0d0" stroke-width="1.500" stroke-dasharray="2.500 2"/><circle cx="1328" cy="827.500" r="4.500" fill="none" stroke="#46c0c0" stroke-width="2"/><path d="M1324.500 831L1320 836" stroke="#46c0c0" stroke-width="2.500"/>
    <path d="M1348 827l3 2V822q1.500-2 2.500 0V819q1.500-2 2.700 0v-1q1.500-1.500 2.600.500v2q1.500-1.500 2.600 0v7l2-2l1.500 1.500L1360 837h-5Z" fill="#d0d0d0"/><use href="#corner" x="1362.500" y="834.500"/>
    <circle cx="1383" cy="826.500" r="7" fill="#d0d0d0"/><path d="M1376 827A7 7 0 0 1 1383 819.500V827Z" fill="#46c0c0"/><path d="M1384 819.500A7 7 0 0 1 1390 827H1384Z" fill="#46c0c0"/><path d="M1393 820Q1394 826 1387 832T1376 836Q1374 834 1377 831" fill="none" stroke="#444" stroke-width="3.500"/><path d="M1390 820Q1394 820 1392 825Q1389 831 1383 834T1376 833" fill="none" stroke="#d0d0d0" stroke-width="1.500"/><use href="#corner" x="1390.500" y="834.500"/>
    <path d="M1404 820h17v16h-17z" fill="#d0d0d0"/><path d="M1405 829h7v6h-7z" fill="none" stroke="#333"/><path d="M1412 829L1418 823M1414 822.500h4.500v4.500" fill="none" stroke="#333" stroke-width="2"/>
  </svg>
</footer>
<script src="app.js"></script>
</body>
</html>
```
FILE: styles.css
```css
*,*::before{box-sizing:border-box}
:root{--seg:"Open Sans","Noto Sans",sans-serif;--tah:"Noto Sans","Open Sans",sans-serif}
body{margin:0;width:1440px;height:850px;overflow:hidden;background:#444;color:#e6e6e6;font-family:var(--tah);font-size:12px;display:flex;flex-direction:column}
svg{display:block;flex:none}
span{white-space:nowrap}
.defs{position:absolute}
i{display:block;flex:none}
.tri{width:0;height:0;border:4px solid transparent;border-top:6px solid #d8d8d8;border-bottom:0}
.tri.dark{border-top-color:#000;border-left-width:5px;border-right-width:5px}

.titlebar{height:29px;flex:none;background:#fff;color:#000;display:flex;align-items:center;padding:0 0 1px 2px;font:15px var(--seg)}
.apptitle{margin-left:5px;flex:1;letter-spacing:-.35px}
.logo3{font:bold 15px "Liberation Sans",sans-serif;fill:#0d7f86}
.logom{font:bold 4px "Liberation Sans",sans-serif;fill:#3aa8aa}

.menubar{height:27px;flex:none;display:flex;align-items:center;background:linear-gradient(#555,#444);border-bottom:1px solid #111;font:14px/24px var(--seg);letter-spacing:-.23px;color:#fff}
.menus{width:1034px;padding-left:12px;display:grid;grid-template-columns:46px 50px 60.500px 64.500px 63px 69px 83px 89px 113px 90px 83px 93px 1fr}
.menus u{text-underline-offset:2px}
.more{width:13px;height:26px;border-radius:4px;background:#666;color:#111;text-align:center;font:bold 14px/23px var(--seg)}
.signin{margin-left:4px;width:120px;height:22px;background:#d0d0d0;color:#111;display:flex;align-items:center;padding:0 4px 0 5px;font:12.500px var(--tah);letter-spacing:-.4px}
.signin span{margin-left:3px;flex:1}
.wslabel{margin-left:24px;width:79px;color:#ddd;font-size:13px;letter-spacing:-.2px}
.wsselect{width:163px;height:25px;background:#5e5e5e;border-left:1px solid #444;display:flex;align-items:center;justify-content:space-between;padding:0 9px 0 6px;color:#ddd;font-size:13px;letter-spacing:-.35px}

.toolbar{height:40px;flex:none;display:flex;align-items:center;overflow:hidden}
.vgrip{width:3px;height:32px;margin-left:3px;background:repeating-linear-gradient(#aaa 0 1px,transparent 1px 2px);mask:linear-gradient(90deg,#000 1px,transparent 1px 2px,#000 2px)}
.drop{height:22px;background:#656565;color:#ddd;display:flex;align-items:center;justify-content:space-between;padding:0 9px 0 8px}
.toolbar .drop{align-self:flex-start;margin-top:4px;flex:none}
.w85{width:85px}.w148{width:148px;padding-left:5px!important;letter-spacing:.13px}
.tsep{width:2px;height:20px;background:linear-gradient(90deg,#151515 1px,#333 1px);margin-top:-1px}
.on{background:#5d88c2;border-radius:4px}
.toolbar .first{margin-left:4px}
.t3{font:bold 31px "Liberation Sans",sans-serif;fill:#d0d0d0}

.ribbon{height:48px;flex:none;display:flex}
.tall{height:45px;margin-top:2px}
.ribbody{margin-left:5px;flex:1;border-top:1px solid #6c6c6c;border-left:1px solid #6c6c6c}
.tabs{height:24px;background:#525252;border-bottom:1px solid #333;display:flex;color:#a5a5a5;font:14.500px/22px var(--seg);letter-spacing:-.18px;padding:2px 0 0 4px}
.tabs span{width:116px;flex:none}
.tabs .tab{width:101px;height:21px;padding-left:25px;margin-right:29px;background:linear-gradient(#6a6a6a,#5a5a5a);border:1px solid #2e2e2e;border-bottom:0;border-radius:3px 3px 0 0;color:#c4c4c4;line-height:20px}
.tabs span:nth-child(3){width:118px}.tabs span:nth-child(4){width:136px}.tabs span:nth-child(5){width:96px}
.tabs svg{margin-top:3px}
.panels{height:23px;background:linear-gradient(#484848,#363636);border-bottom:1px solid #2c2c2c;padding-left:1px;display:grid;grid-template-columns:133px 125px 40px 109px 71px 53px 36px 90px 70px 48px 79px;font:14.500px/21px var(--seg);color:#e0e0e0}
.panels span{border:1px solid #565656;border-top-color:#505050;margin-right:2px;padding-left:5px;background:linear-gradient(#4a4a4a,#3c3c3c)}

.work{height:574px;flex:none;display:flex}
.hgrip{height:3px;background:repeating-linear-gradient(90deg,#aaa 0 1px,transparent 1px 2px);mask:linear-gradient(#000 1px,transparent 1px 2px,#000 2px)}
.vptabs{width:74px;flex:none;margin-right:-4px}
.vptabs .hgrip{margin:8px 9px 0 2px}
.strip{margin-top:6px;width:50px;height:557px;background:linear-gradient(90deg,#2d2d2d 60%,#333);border-right:1px solid #000;padding:463px 0 0 12px}
.expand{background:#4a4a4a;border:1px solid #222;border-radius:4px}
.layout{margin:13px 0 0 -7px;width:44px;height:55px;border-radius:4px 0 0 4px;background:linear-gradient(#4c6688,#3f84dc);padding:9px 0 0 4px}
.layout i{width:38px;height:35px;border:1px solid #222;border-radius:2px;background:linear-gradient(#555,#66758a)}

.explorer{width:297px;flex:none;padding:8px 6px 0 2px}
.explorer>.hgrip{margin:0 0 0 2px}
.exmenu{margin:11px 0 0 16px;display:grid;grid-template-columns:61px 70px 47px 1fr;font:14.500px/20px var(--seg);letter-spacing:-.15px;color:#fff}
.exsearch,.exfoot{display:flex;align-items:center;height:30px}
.exsearch{margin:4px 0 0 4px}
.field{width:188px;height:27px;flex:none;border:1px solid #666;color:#ff0;font:14.500px/24px var(--seg);letter-spacing:-.1px;padding-left:1px}
.exfoot .field{width:182px}
.sq{background:#5d88c2}
.exsep{width:2px;height:28px;margin-left:2px;background:linear-gradient(90deg,#222 1px,#888 1px)}
.chev{color:#56508e;font:20px/18px var(--seg)}
.exsearch .chev,.exfoot .chev{align-self:flex-start;margin:-4px 0 0 20px}
.exfoot .chev{margin-left:8px}
.exbody{display:flex;margin-top:2px;height:464px}
.filters{width:25px;padding-top:4px;display:flex;flex-direction:column;gap:3px}
.filters svg{width:23px;height:24px}
.filters hr{width:19px;height:2px;border:0;border-top:1px solid #222;background:#888;margin:1px 0 0 2px}
.filters .chev{text-align:center;margin-top:-4px;padding-left:4px}
.o{fill:#d0d0d0;stroke:#333840}
.b{fill:#5d88c2;stroke:#333840}
.tree{width:265px;border:1px solid #383838;font:12px/20px var(--tah);color:#fff}
.thead{height:23px;display:flex;align-items:center;border:1px solid #5a5a5a;padding-left:3px}
.thead span:first-child{width:185px;letter-spacing:.16px;padding-bottom:2px}
.thead .fz{margin-left:2px;height:21px;border-left:1px solid #5a5a5a;padding-left:3px}
.trow{display:flex;height:22px;padding-left:1px}
.trow .nm{width:140px;background:#5b5b5b;padding:2px 0 0 3px;border-right:1px solid #5b5b5b}
.trow .fr{width:63px;background:#5b5b5b;display:flex;align-items:center;justify-content:center}
.trow.sel .nm,.trow.sel .fr{background:#828282}
.trow.sel .nm{border-color:#555}
.exfoot{margin:1px 0 0 4px}

.viewport{width:819px;height:569px;flex:none;margin-top:6px;border:2px solid #7f6b28;position:relative}
.dims text{font:10px "Liberation Sans",sans-serif;fill:#484848;letter-spacing:-.5px}
.plan{filter:blur(.35px)}
.dims{filter:blur(.6px)}
.ax{font:14px "Noto Sans",sans-serif}
.cube{font:bold 7px "Liberation Sans",sans-serif;fill:#555b66}
.vplabel{position:absolute;left:3px;top:5px;font:13.500px/20px var(--seg);letter-spacing:.19px;color:#c8c8c8}
.caddy{position:absolute;left:407px;top:233px;display:flex;flex-direction:column}
.cadtitle{width:51px;height:42px;border-radius:6px;background:rgba(50,50,50,.82);color:#fff;display:flex;font:12px/21px var(--tah)}
.cadtitle i{width:7px;height:18px;border:solid #ddd;border-width:0 2px;margin:12px 3px 0 7px}
.pill{margin-top:7px;height:28px;border:1px solid #555;border-radius:11px;background:linear-gradient(rgba(235,235,235,.75),rgba(210,210,210,.75));display:flex;align-items:center;color:#444;font:12.500px var(--tah)}
.p1{width:60px;padding-left:7px;gap:5px}.p2{width:92px;padding-left:9px;gap:9px}
.cadbtns{display:flex;gap:7px;margin-top:7px}
.cadbtns svg{border:1px solid #555;border-radius:9px;background:linear-gradient(rgba(245,245,245,.85),rgba(215,215,215,.85))}
.cg{fill:#86d4d4;stroke:#666}

.command{width:254px;flex:none;padding:8px 1px 0 5px}
.command>.hgrip{margin:0 1px}
.ctabs{display:flex;gap:1px;margin-top:6px;height:34px}
.ctabs svg{width:39px;height:34px;background:#3a3a3a;border-radius:5px 5px 0 0}
.ctabs .act{background:#444}
.cbody{height:523px;border:1px solid #3a3a3a;padding:8px 2px 0 4px}
.objname{display:flex;gap:7px;height:24px;align-items:center}
.inp{height:23px;background:#656565;color:#ddd;line-height:19px;padding-left:3px;border:1px solid #3e3e3e}
.objname .inp{width:209px}
.objname i{width:22px;height:24px;background:#5c9bd8;border:1px solid #111}
.modlist{margin-top:12px;width:239px;display:flex;align-items:center;justify-content:space-between;padding-right:8px}
.stack{margin-top:5px;width:240px;height:127px;border:1px solid #fff;display:flex;color:#fff}
.srows{width:216px;height:125px;overflow:hidden}
.srows div{height:21px;display:flex;align-items:center}
.srows .s0{border-bottom:1px solid #888}
.srows span{flex:1}
.srows i{width:15px;height:15px;background:#d0d0d0;border:1px solid #222;margin-right:6px}
.srows .s2{margin-left:13px;background:repeating-linear-gradient(90deg,#111 0 1px,transparent 1px 2px) 0 10px/19px 1px no-repeat;border-left:1px dotted #111;padding-left:20px}
.srows .s2 span{padding-left:3px;display:flex;align-items:center;justify-content:space-between;height:21px}
.srows .cur span{background:#5d88c2}
.stools{margin-top:6px}
.splitter{margin:18px 6px 0;height:4px;display:flex;align-items:flex-start;gap:2px}
.splitter i{flex:1;height:1px;background:#666;margin-top:1px}
.splitter b{width:14px;height:3px;background:repeating-linear-gradient(90deg,#ddd 0 1px,transparent 1px 2px);mask:linear-gradient(#000 1px,transparent 1px 2px,#000 2px)}
.rollwrap{margin-top:5px;display:flex;gap:4px}
.rollout{width:228px;height:255px;background:#525252;border-radius:0 0 3px 3px;border:1px solid #484848;border-top:0}
.rhead{height:27px;display:flex;padding:2px 7px 0 7px;color:#fff;font:bold 12px/8px var(--tah)}
.rhead b{flex:1;letter-spacing:.25px}
.rhead svg{margin-top:-1px}
.dots{width:8px;height:7px;margin-top:-1px;background:repeating-linear-gradient(90deg,#aaa 0 1px,transparent 1px 2px);mask:repeating-linear-gradient(#000 0 1px,transparent 1px 2px)}
.rgrid{padding-left:14px;display:grid;grid-template-columns:74px 18px 4px 74px 18px;column-gap:2px;row-gap:8px;grid-auto-rows:20px}
.rgrid span{background:#656565;border-radius:4px;text-align:center;line-height:20px;color:#ddd;box-shadow:0 0 0 1px #4b4b4b}
.rgrid .full{grid-column:1/6}.rgrid .wide{grid-column:1/5}.rgrid .two{grid-column:span 2}.rgrid .c4{grid-column-start:4}
.rgrid .c4.two{grid-column:4/6}
.rgrid .cfg{display:flex;align-items:center;justify-content:center}
.cfg::before{content:"";width:10px;height:10px;border:1px solid #000;border-top-width:3px}
.rscroll{width:8px;height:258px;border-radius:4px;background:#383838;padding-top:31px}
.rscroll i{width:6px;height:45px;margin-left:1px;border-radius:3px;background:#5a5a5a}

.timebar{height:64px;flex:none;display:flex}
.tgrip{height:54px;margin-top:9px}
.tbody{margin-left:5px;flex:1}
.slider{display:flex;height:32px;padding:7px 0 0 1px;gap:2px}
.slider span{background:#656565;border-radius:4px;height:20px;text-align:center;line-height:21px;color:#e0e0e0}
.sb{width:18px}.slider .sval{width:154px;letter-spacing:.45px}
.trackrow{border-top:2px solid #111;display:flex;height:32px}
#track{background:#292929;overflow:visible}
#track line{stroke:#888;shape-rendering:crispEdges}
#track text{font:12.500px var(--tah);fill:#bbb;text-anchor:middle}

.status{flex:1;display:flex;padding-top:5px}
.script{width:123px;margin-left:4px}
.script div{height:29px;border:2px solid;border-color:#888 #fff #fff #888}
.pink{background:#dcc2c2}
.mini{background:#fff;color:#888;font:15px/20px "Liberation Mono",monospace;padding-left:4px}
.mini span{display:block;width:112px;overflow:hidden}
.fsep{width:3px;height:63px;margin:-2px 0 0 3px;background:linear-gradient(90deg,#222 1px,#444 1px 2px,#000 2px)}
.info{width:745px;color:#fff}
.irow{display:flex;align-items:center;height:31px;line-height:30px}
.irow .sel{width:198px;padding-left:4px}
.irow .lb{width:16px}
.num{width:84px;height:22px;background:#656565;border:1px solid #404040;color:#ddd;line-height:21px;padding-left:3px;display:flex;justify-content:space-between;padding-right:2px}
.num i{width:7px;height:14px;margin-top:3px;background:conic-gradient(from 150deg at 50% 0,#d0d0d0 60deg,transparent 0) 0 0/7px 6px no-repeat,conic-gradient(from -30deg at 50% 100%,#d0d0d0 60deg,transparent 0) 0 100%/7px 6px no-repeat}
.irow .num{margin-right:3px}
.irow .num+.lb{width:16px}
.grid{margin-left:3px}
.irow.two{padding-left:578px;height:30px;color:#ddd;font-size:13px;letter-spacing:-.05px}
.bsep{width:1px;height:22px;background:#111}
.tt{margin:0 6px 0 1px}
.play{width:150px}
.prow{display:flex;align-items:center;margin-top:-2px}
.prow .num{width:87px}
.bigkey{margin:2px 0 0 11px;width:53px;height:54px;background:#656565;border-radius:4px}
.keys{margin:3px 0 0 5px;width:58px;display:flex;flex-direction:column;gap:2px}
.keys span,.krow span{height:25px;background:#656565;border-radius:4px;text-align:center;line-height:26px;color:#ddd}
.keys2{margin:2px 0 0 5px;width:143px}
.krow{display:flex;margin-top:4px}
.krow span{width:110px;margin-top:3px}
.nav{margin:-1px 0 0 11px}
```
FILE: app.js
```js
// Draws the frame ticks of the track bar: one per frame, numbered every five.
const NS = 'http://www.w3.org/2000/svg';
const track = document.getElementById('track');
function tick(x, y1, y2) {
  const l = document.createElementNS(NS, 'line');
  l.setAttribute('x1', x); l.setAttribute('x2', x);
  l.setAttribute('y1', y1); l.setAttribute('y2', y2);
  track.appendChild(l);
}
for (let f = 0; f <= 100; f++) {
  const x = Math.floor(79.3 + f * 12.93) + 0.5;
  const major = f % 5 === 0;
  tick(x, 752, major ? 767 : 765);
  if (major) {
    tick(x, 778, 782);
    const t = document.createElementNS(NS, 'text');
    t.setAttribute('x', x - 0.5); t.setAttribute('y', 778);
    t.textContent = f;
    if (f === 0) t.style.fill = '#d8d060';
    track.appendChild(t);
  }
}
```
